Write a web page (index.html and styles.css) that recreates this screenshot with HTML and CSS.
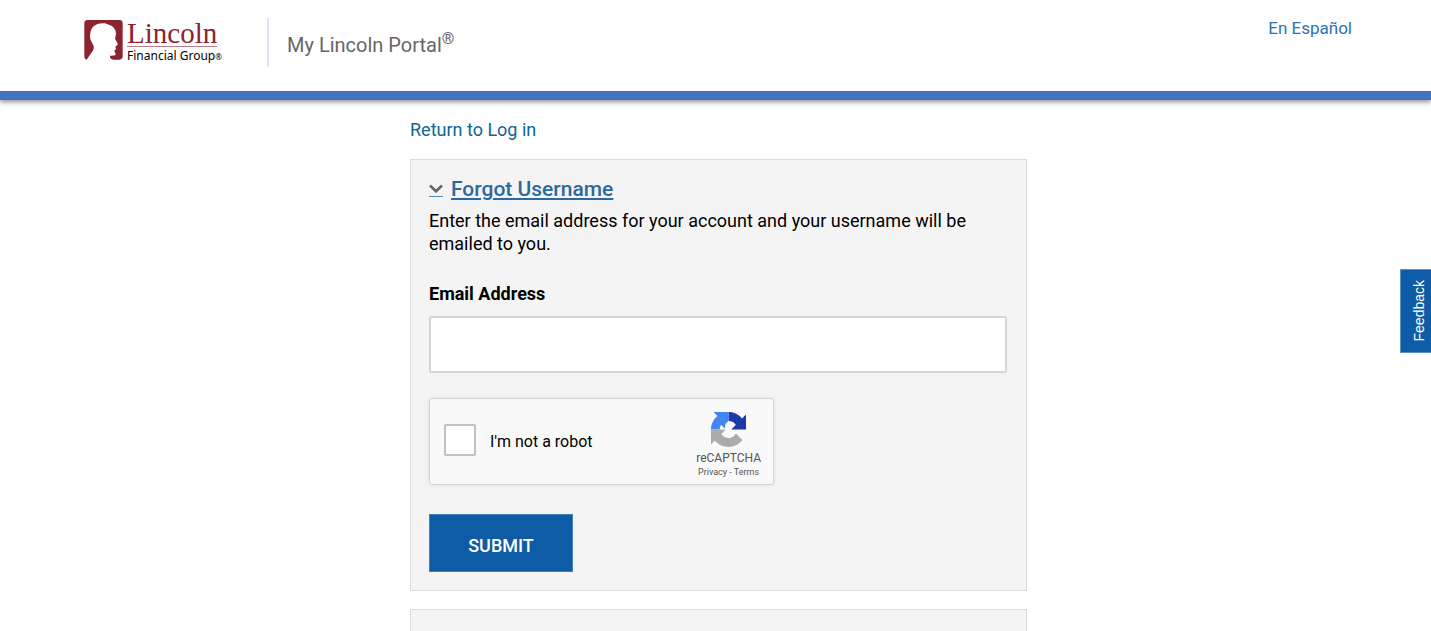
FILE: index.html
```html
<!DOCTYPE html>
<html lang="en">
<head>
<meta charset="utf-8">
<title>My Lincoln Portal - Forgot Username</title>
<link rel="stylesheet" href="styles.css">
</head>
<body>
<header class="site-header">
  <a class="logo" href="#" aria-label="Lincoln Financial Group">
    <svg class="logo-mark" viewBox="0 0 115 120" aria-hidden="true">
      <path fill="#8b2332" d="M10 0H105Q115 0 115 10V109Q115 119 105 119H88C80 118 76 113 77 107Q90 108 94 104L92 97L89 93L95 88L93 80L101 73L92 56L95 42Q94 20 74 14L62 10Q40 8 26 20Q14 34 18 58L28 78Q30 90 20 100L7 119Q0 118 0 109V10Q0 0 10 0Z"/>
    </svg>
    <span class="logo-text">
      <span class="logo-name">Lincoln</span>
      <span class="logo-group">Financial Group<span class="logo-reg">®</span></span>
    </span>
  </a>
  <div class="portal-name">My Lincoln Portal<sup>®</sup></div>
  <a class="language" href="#">En Español</a>
</header>
<main class="content">
  <a class="return-link" href="#">Return to Log in</a>
  <section class="panel">
    <h1 class="panel-title">
      <a class="panel-toggle" href="#">
        <span class="chevron"><svg viewBox="0 0 14 9" aria-hidden="true"><path d="M1 1.5L7 7.3L13 1.5" fill="none" stroke="#666" stroke-width="2.6"/></svg></span>
        <span class="panel-label">Forgot Username</span>
      </a>
    </h1>
    <p class="panel-text">Enter the email address for your account and your username will be emailed to you.</p>
    <form class="form">
      <label class="field-label" for="email">Email Address</label>
      <input class="field" id="email" type="email">
      <div class="captcha">
        <input class="captcha-box" id="robot" type="checkbox">
        <label class="captcha-label" for="robot">I'm not a robot</label>
        <div class="captcha-brand">
          <svg class="captcha-logo" viewBox="0 0 64 64" aria-hidden="true">
            <path fill="#1c3aa9" d="M64 31.955a33 33 0 0 0-.014-1.375V4.687l-7.158 7.158C50.969 4.674 42.052.093 32.064.093V16.500C38 16.500 43 19 45.300 23.700L37 32h27z"/>
            <path fill="#4285f4" d="M32.100.093H4.594l7.158 7.158C4.581 13.125 0 22.042 0 32.029H16C16 29 17 26 18.500 23.500L25.500 30.500C25 24 27 19.500 32.100 16.500z"/>
            <path fill="#ababab" d="M.001 32.029V59.297l7.158-7.158c5.860 7.172 14.777 11.753 24.764 11.753 10.394 0 19.629-4.961 25.467-12.641L45.671 39.398a15.550 15.550 0 0 1-4.754 5.336c-2.050 1.600-4.955 2.908-8.979 2.908-.486 0-.861-.057-1.137-.164-4.985-.393-9.411-3.144-12.017-7.234L27 32.029z"/>
          </svg>
          <span class="captcha-name">reCAPTCHA</span>
          <span class="captcha-links"><a href="#">Privacy</a> - <a href="#">Terms</a></span>
        </div>
      </div>
      <button class="submit" type="submit">SUBMIT</button>
    </form>
  </section>
  <section class="panel"></section>
</main>
<button class="feedback" type="button">Feedback</button>
</body>
</html>
```
FILE: styles.css
```css
* { box-sizing: border-box; }
html { overflow: hidden; }
body {
  margin: 0;
  background: #fff;
  color: #000;
  font-family: Roboto, "Liberation Sans", sans-serif;
  font-size: 18px;
  line-height: 23px;
}
a { color: #0c6694; text-decoration: none; }
.site-header {
  display: flex;
  align-items: flex-start;
  padding: 18px 79px 24px 84px;
  border-bottom: 9px solid #4174be;
  box-shadow: 0 2px 5px rgba(0, 0, 0, 0.45);
}
.logo { display: flex; gap: 4px; width: 183px; padding-top: 2px; }
.logo-mark { width: 39px; height: 40px; }
.logo-text { display: flex; flex-direction: column; align-items: flex-start; }
.logo-name {
  border-bottom: 1px solid #b98088;
  color: #8b2332;
  font: 29px/26px "Liberation Serif", serif;
}
.logo-group {
  color: #000;
  font: 12px/18px "Noto Sans", sans-serif;
  white-space: nowrap;
}
.logo-reg { font-size: 8px; }
.portal-name {
  flex: 1;
  padding: 15px 0 10px 18px;
  border-left: 2px solid #dae4f4;
  color: #666;
  font-size: 20px;
  line-height: 24px;
}
.portal-name sup { font-size: 16px; line-height: 0; }
.language { color: #2a72b8; font-size: 17px; line-height: 20px; }
.content {
  width: 623px;
  max-width: 100%;
  margin: 0 auto;
  padding: 18px 0 0 6px;
}
.return-link { display: block; margin-bottom: 17px; line-height: 24px; }
.panel {
  min-height: 40px;
  margin-bottom: 18px;
  padding: 17px 19px 18px 18px;
  border: 1px solid #dcdcdc;
  background: #f4f4f4;
}
.panel-title { margin: 0; font-size: 21px; font-weight: 500; line-height: 24px; }
.panel-toggle { display: flex; gap: 8px; color: #2a6a9e; }
.chevron {
  display: flex;
  align-items: flex-start;
  width: 14px;
  height: 20px;
  padding-top: 7px;
  border-bottom: 1px solid #4e8fc2;
}
.chevron svg { width: 14px; height: 9px; }
.panel-label { text-decoration: underline; }
.panel-text { margin: 8px 0 27px; }
.form { display: flex; flex-direction: column; align-items: flex-start; }
.field-label { font-weight: 700; margin-bottom: 11px; }
.field {
  width: 100%;
  height: 57px;
  margin-bottom: 25px;
  padding: 0 16px;
  border: 2px solid #d6d6d6;
  border-radius: 2px;
  background: #fff;
  font: inherit;
}
.captcha {
  display: flex;
  align-items: center;
  width: 345px;
  height: 87px;
  margin-bottom: 29px;
  padding: 0 12px 0 14px;
  border: 1px solid #d3d3d3;
  border-radius: 3px;
  background: #f9f9f9;
  box-shadow: 0 0 4px rgba(0, 0, 0, 0.08);
}
.captcha-box {
  appearance: none;
  width: 32px;
  height: 32px;
  margin: 0 14px 4px 0;
  border: 2px solid #c1c1c1;
  border-radius: 2px;
  background: #fff;
}
.captcha-label { flex: 1; font-size: 16px; }
.captcha-brand {
  display: flex;
  flex-direction: column;
  align-items: center;
  color: #555;
  padding-top: 6px;
}
.captcha-logo { width: 35px; height: 35px; margin-bottom: 4px; }
.captcha-name { font-size: 12px; line-height: 15px; }
.captcha-links { font-size: 9px; line-height: 12px; }
.captcha-links a { color: #555; }
.submit {
  width: 144px;
  height: 58px;
  padding: 6px 0 0;
  border: 1px solid #3f7fba;
  background: #0d5ca5;
  color: #fff;
  font: 500 18px/24px Roboto, sans-serif;
}
.feedback {
  position: fixed;
  top: 269px;
  right: 0;
  width: 31px;
  height: 84px;
  padding: 0 0 0 5px;
  border: 1px solid #5b93c8;
  border-right: 0;
  background: #0d5ca5;
  color: #fff;
  font: 14px/22px "Liberation Sans", sans-serif;
  writing-mode: sideways-lr;
}
```
